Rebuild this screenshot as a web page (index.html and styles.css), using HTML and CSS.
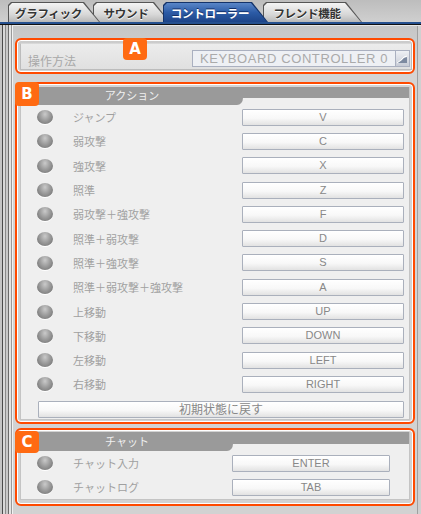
FILE: index.html
```html
<!DOCTYPE html>
<html lang="ja">
<head>
  <meta charset="UTF-8">
  <title>コントローラー設定</title>
  <link rel="stylesheet" href="styles.css">
</head>
<body>

<nav class="tabs">
  <div class="tab t1"><span>グラフィック</span></div>
  <div class="tab t2"><span>サウンド</span></div>
  <div class="tab t3 active"><span>コントローラー</span></div>
  <div class="tab t4"><span>フレンド機能</span></div>
</nav>

<div class="frame">
  <div class="stripes"></div>
  <main class="content">

    <section class="box box-a">
      <div class="badge badge-a">A</div>
      <div class="panel-a">
        <span class="label-a">操作方法</span>
        <div class="select">KEYBOARD CONTROLLER 0</div>
        <div class="select-btn">
          <svg width="14" height="17" viewBox="0 0 14 17">
            <path d="M2 13 L6 11 L9 8 L12 7 L12 13 Z" fill="#7d8aa0"/>
            <path d="M2 13 L6 10 L9 7 L12 6" stroke="#fff" stroke-width="1" fill="none"/>
          </svg>
        </div>
      </div>
    </section>

    <section class="box box-b">
      <div class="badge badge-b">B</div>
      <div class="panel">
        <div class="head">
          <div class="head-left">アクション</div>
          <div class="head-right"></div>
        </div>
        <ul class="rows">
          <li class="row"><i class="led"></i><span class="name">ジャンプ</span><span class="key">V</span></li>
          <li class="row"><i class="led"></i><span class="name">弱攻撃</span><span class="key">C</span></li>
          <li class="row"><i class="led"></i><span class="name">強攻撃</span><span class="key">X</span></li>
          <li class="row"><i class="led"></i><span class="name">照準</span><span class="key">Z</span></li>
          <li class="row"><i class="led"></i><span class="name">弱攻撃＋強攻撃</span><span class="key">F</span></li>
          <li class="row"><i class="led"></i><span class="name">照準＋弱攻撃</span><span class="key">D</span></li>
          <li class="row"><i class="led"></i><span class="name">照準＋強攻撃</span><span class="key">S</span></li>
          <li class="row"><i class="led"></i><span class="name">照準＋弱攻撃＋強攻撃</span><span class="key">A</span></li>
          <li class="row"><i class="led"></i><span class="name">上移動</span><span class="key">UP</span></li>
          <li class="row"><i class="led"></i><span class="name">下移動</span><span class="key">DOWN</span></li>
          <li class="row"><i class="led"></i><span class="name">左移動</span><span class="key">LEFT</span></li>
          <li class="row"><i class="led"></i><span class="name">右移動</span><span class="key">RIGHT</span></li>
        </ul>
        <div class="reset">初期状態に戻す</div>
      </div>
    </section>

    <section class="box box-c">
      <div class="badge badge-c">C</div>
      <div class="panel">
        <div class="head small">
          <div class="head-left">チャット</div>
          <div class="head-right"></div>
        </div>
        <ul class="rows">
          <li class="row"><i class="led"></i><span class="name">チャット入力</span><span class="key">ENTER</span></li>
          <li class="row"><i class="led"></i><span class="name">チャットログ</span><span class="key">TAB</span></li>
        </ul>
      </div>
    </section>

  </main>
</div>

</body>
</html>
```

FILE: styles.css
```css
body {
  margin: 0;
  width: 421px;
  height: 514px;
  overflow: hidden;
  background: #d0d0d0;
  font-family: "Noto Sans CJK JP", "Liberation Sans", sans-serif;
}

/* tabs */
.tabs {
  display: flex;
  height: 22px;
  padding-left: 8px;
  background: linear-gradient(#bdbdbd, #cfcfcf);
  border-bottom: 2px solid #25508f;
  box-shadow: 0 1px 0 #111;
  position: relative;
}
.tab {
  position: relative;
  margin-top: 2px;
  height: 20px;
  background: #555;
  clip-path: polygon(0 3px, 3px 0, calc(100% - 16px) 0, 100% 100%, 0 100%);
}
.tab span {
  display: flex;
  align-items: center;
  justify-content: center;
  height: 19px;
  margin: 1px 0 0 1px;
  padding-right: 12px;
  background: linear-gradient(#f4f4f4, #d8d8d8 60%, #b8b8b8);
  clip-path: polygon(0 3px, 3px 0, calc(100% - 17px) 0, calc(100% - 1px) 100%, 0 100%);
  font-size: 11.5px;
  font-weight: bold;
  color: #333;
  letter-spacing: -0.3px;
  text-shadow: 0 1px 0 #fff;
}
.t1 { width: 92px; z-index: 4; }
.t2 { width: 77px; margin-left: -7px; z-index: 3; }
.t3 { width: 105px; margin-left: -7px; z-index: 5; }
.t4 { width: 99px; margin-left: -5px; z-index: 1; }
.tab.active { background: #14336a; }
.tab.active span {
  background: linear-gradient(#5a86c8, #2c5ba6 50%, #1d4488);
  color: #fff;
  text-shadow: 0 -1px 0 #12306a;
}

/* frame */
.frame {
  display: flex;
  height: 489px;
  margin-top: 1px;
}
.stripes {
  width: 12px;
  background: linear-gradient(to right, #c4c4c4 0 2px, #4a4a4a 2px 3px, #d8d8d8 3px 5px, #8a8a8a 5px 6px, #c8c8c8 6px 8px, #6a6a6a 8px 9px, #e4e4e4 9px 11px, #9a9a9a 11px 12px);
}
.content {
  flex: 1;
  padding: 12px 6px 0 2px;
  border-left: 1px solid #f2f2f2;
  border-top: 1px solid #e8e8e8;
  background: linear-gradient(#c6c6c6, #d4d4d4 40px, #d2d2d2);
  box-shadow: inset -3px 0 0 #d0d0d0, inset -4px 0 0 #a0a0a0;
}

/* sections */
.box {
  position: relative;
  box-sizing: border-box;
  width: 400px;
  border: 2px solid #ff4a00;
  border-radius: 6px;
  box-shadow: inset 0 0 0 1px #fff;
}
.box-a { height: 36px; padding: 3px 1px 2px 3px; margin-bottom: 8px; }
.box-b { height: 342px; padding: 3px 3px 2px 3px; margin-bottom: 4px; }
.box-c { height: 78px; padding: 2px 3px 4px 3px; }

.badge {
  position: absolute;
  width: 24px;
  height: 22px;
  border-radius: 4px;
  background: #ff6a12;
  color: #fff;
  font-family: "DejaVu Sans", sans-serif;
  font-weight: bold;
  font-size: 15px;
  line-height: 22px;
  text-align: center;
  z-index: 2;
}
.badge-a { left: 106px; top: -2px; }
.badge-b { left: -2px; top: -2px; height: 24px; line-height: 24px; }
.badge-c { left: -2px; top: 1px; }

/* A */
.panel-a {
  display: flex;
  align-items: center;
  height: 27px;
  box-sizing: border-box;
  background: linear-gradient(#ececec, #e0e0e0);
  border: 1px solid #bcbcbc;
  border-top-color: #d8d8d8;
}
.label-a {
  padding-left: 7px;
  padding-top: 7px;
  font-size: 12px;
  color: #a8a8a8;
}
.select {
  margin-left: auto;
  margin-top: 4px;
  box-sizing: border-box;
  width: 204px;
  height: 17px;
  border: 1px solid #aab0c0;
  background: #eef0f4;
  font-family: "Liberation Sans", sans-serif;
  font-size: 13px;
  line-height: 15px;
  letter-spacing: 0.6px;
  color: #aaaaaa;
  text-align: center;
}
.select-btn {
  margin-top: 4px;
  margin-right: 1px;
  box-sizing: border-box;
  width: 14px;
  height: 17px;
  border: 1px solid #aab0c0;
  border-left: none;
  background: linear-gradient(#eef0f4, #c8ccd6);
  overflow: hidden;
}
.select-btn svg { display: block; margin: -1px 0 0 -1px; }

/* B / C panels */
.panel {
  height: 100%;
  box-sizing: border-box;
  background: #efefef;
  border: 1px solid #c4c4c4;
  border-top: none;
}
.head {
  display: flex;
  align-items: flex-start;
  background: linear-gradient(#9a9a9a 0 11px, transparent 11px);
}
.head-left {
  width: 222px;
  height: 18px;
  background: #9a9a9a;
  border-bottom-right-radius: 6px 7px;
  color: #f0f0f0;
  font-size: 11px;
  line-height: 17px;
  text-align: center;
}
.head-right {
  flex: 1;
  height: 11px;
}
.head.small { background: linear-gradient(#9a9a9a 0 12px, transparent 12px); }
.head.small .head-left { width: 212px; height: 19px; line-height: 19px; }
.head.small .head-right { height: 12px; }

.rows {
  list-style: none;
  margin: 0;
  padding: 0;
}
.row {
  display: flex;
  align-items: center;
  height: 24.3px;
  padding-left: 16px;
  padding-right: 5px;
}
.led {
  width: 16px;
  height: 14px;
  border-radius: 50%;
  background: radial-gradient(ellipse at 50% 30%, #cacaca 0, #9c9c9c 45%, #808080 75%, #727272);
  box-shadow: 0 1px 0 #fff;
}
.name {
  flex: 1;
  padding-left: 20px;
  font-size: 11px;
  color: #a0a0a0;
}
.key, .reset {
  box-sizing: border-box;
  height: 17px;
  border: 1px solid #aab0bc;
  border-radius: 1px;
  background: linear-gradient(#ffffff, #f8f8f8 55%, #e2e2e2);
  box-shadow: inset 0 1px 0 #fff;
  color: #888;
  text-align: center;
}
.key {
  width: 162px;
  font-family: "Liberation Sans", sans-serif;
  font-size: 11px;
  line-height: 15px;
}
.box-c .row { padding-right: 19px; }
.box-c .key { width: 158px; }
.reset {
  margin: 4px 5px 0 17px;
  font-size: 12px;
  line-height: 14px;
}
```
